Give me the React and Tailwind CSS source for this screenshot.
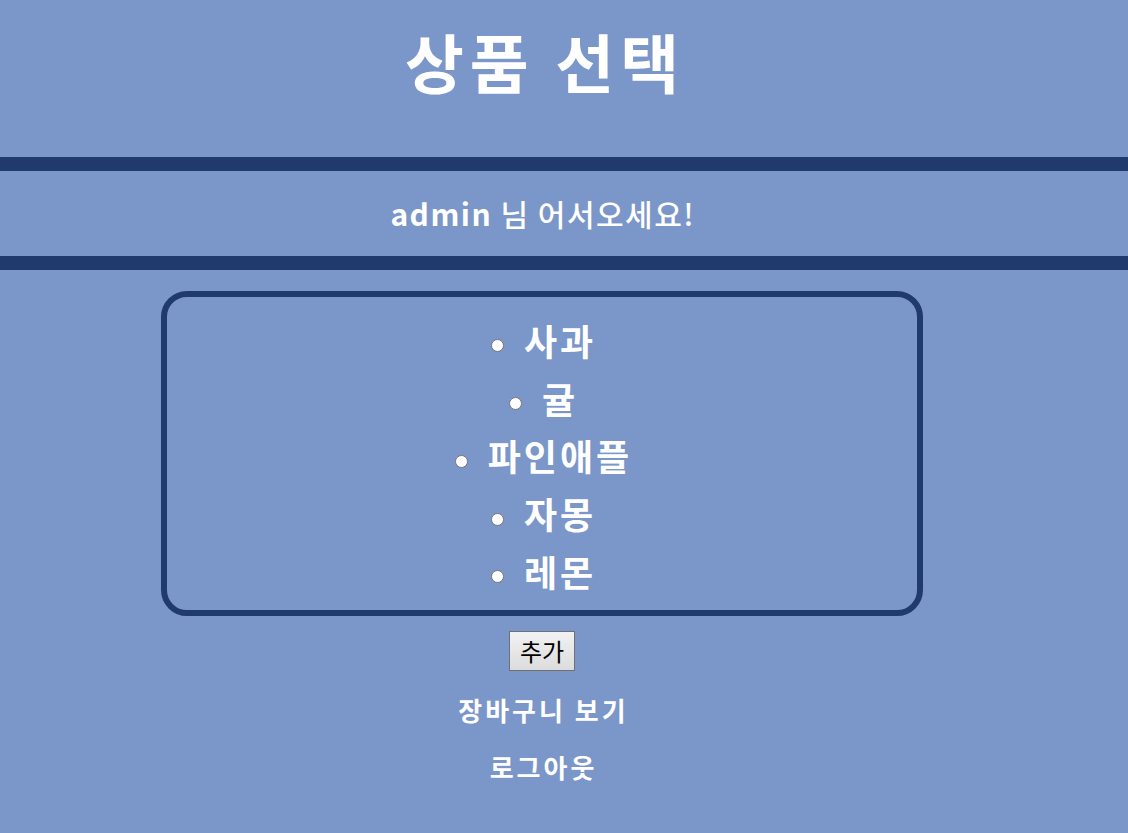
import React from "react";

const KR = { fontFamily: '"Noto Sans CJK KR", "Noto Sans", sans-serif' };

function Item({ label }) {
  return (
    <li className="flex h-[57.75px] items-center justify-center">
      <span className="mt-[12px] mr-[20px] box-border h-[13px] w-[13px] rounded-full border border-[#767676] bg-white" />
      <span className="mr-[-3px] text-[36px] font-bold leading-none tracking-[3px] text-white">{label}</span>
    </li>
  );
}

export default function App() {
  const items = ["사과", "귤", "파인애플", "자몽", "레몬"];
  return (
    <div className="min-h-[833px] w-full bg-[#7b96c8]" style={KR}>
      <div className="flex h-[157px] w-[1084px] justify-center pt-[20px]">
        <h1 className="mr-[-6px] text-[64px] font-bold leading-[80px] tracking-[6px] text-white">상품 선택</h1>
      </div>
      <div className="w-full border-y-[14px] border-[#213a6e]">
        <div className="flex h-[85px] w-[1084px] items-center justify-center">
          <span className="mr-[-1.5px] text-[30px] font-medium tracking-[1.5px] text-white">
            <span className="font-bold">admin</span> 님 어서오세요!
          </span>
        </div>
      </div>
      <div className="flex w-[1084px] flex-col items-center">
        <div className="mt-[21px] box-border h-[325px] w-[762px] rounded-[26px] border-[6px] border-[#213a6e] pt-[14px]">
          <ul>
            {items.map((it) => (
              <Item key={it} label={it} />
            ))}
          </ul>
        </div>
        <button className="mt-[15px] box-border h-[40px] w-[66px] border border-[#707070] bg-gradient-to-b from-[#f2f2f2] to-[#dcdcdc] text-[24px] leading-none text-black">
          추가
        </button>
        <div className="mt-[24px] mr-[-3px] text-[26px] font-bold leading-[30px] tracking-[3px] text-white">장바구니 보기</div>
        <div className="mt-[27px] mr-[-3px] text-[26px] font-bold leading-[30px] tracking-[3px] text-white">로그아웃</div>
      </div>
    </div>
  );
}
